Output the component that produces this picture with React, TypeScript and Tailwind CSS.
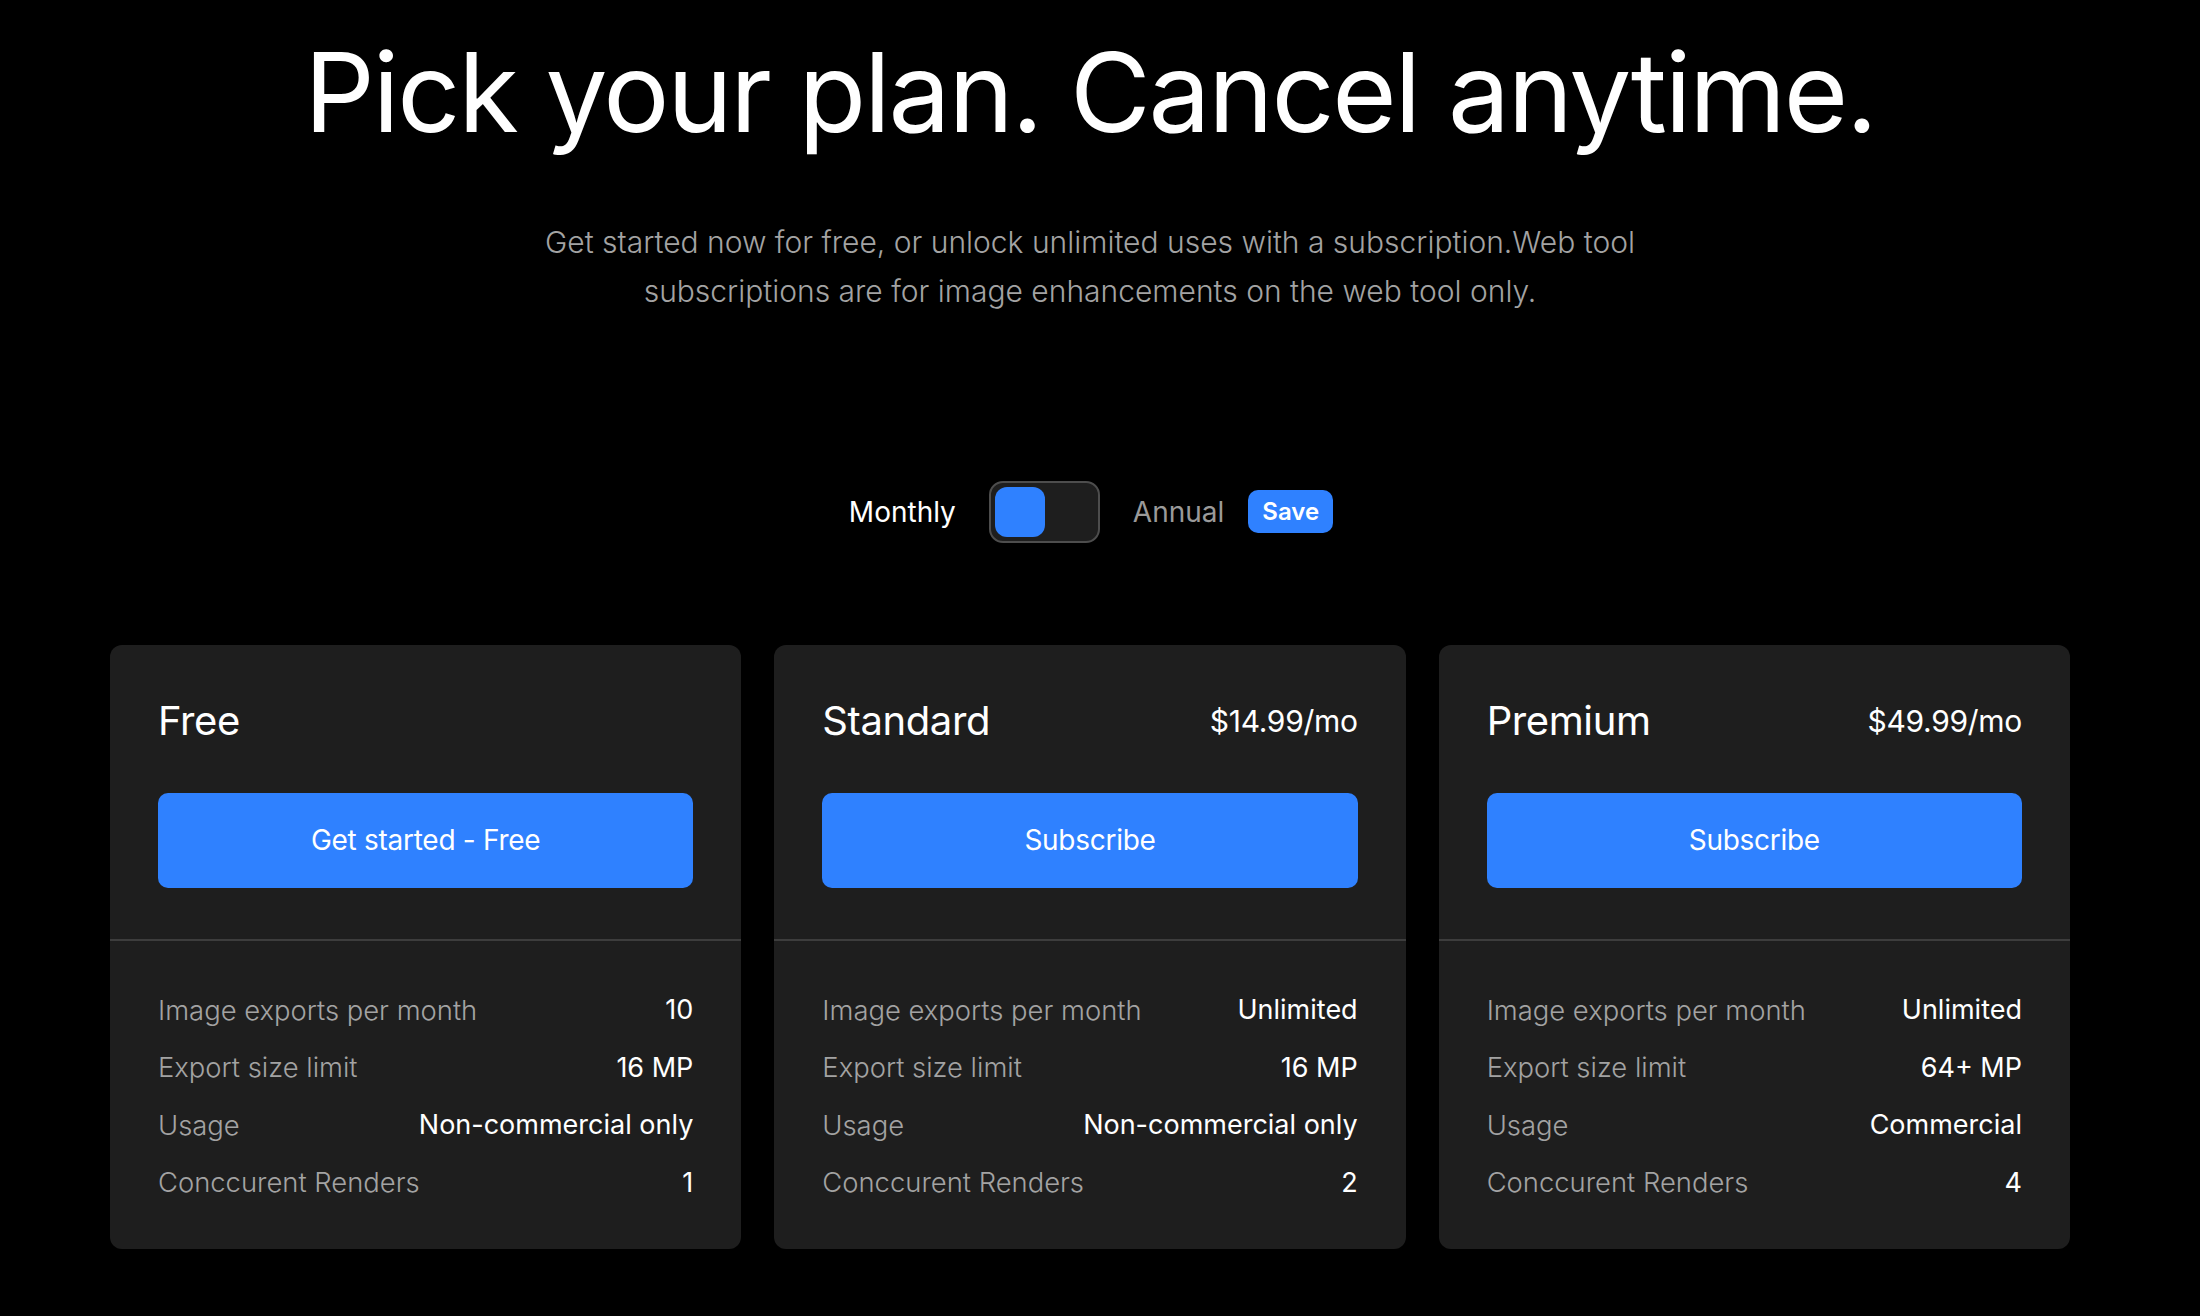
import React from "react";

type Plan = {
  name: string;
  price?: string;
  cta: string;
  rows: [string, string][];
};

const plans: Plan[] = [
  {
    name: "Free",
    cta: "Get started - Free",
    rows: [
      ["Image exports per month", "10"],
      ["Export size limit", "16 MP"],
      ["Usage", "Non-commercial only"],
      ["Conccurent Renders", "1"],
    ],
  },
  {
    name: "Standard",
    price: "$14.99/mo",
    cta: "Subscribe",
    rows: [
      ["Image exports per month", "Unlimited"],
      ["Export size limit", "16 MP"],
      ["Usage", "Non-commercial only"],
      ["Conccurent Renders", "2"],
    ],
  },
  {
    name: "Premium",
    price: "$49.99/mo",
    cta: "Subscribe",
    rows: [
      ["Image exports per month", "Unlimited"],
      ["Export size limit", "64+ MP"],
      ["Usage", "Commercial"],
      ["Conccurent Renders", "4"],
    ],
  },
];

function PlanCard({ plan }: { plan: Plan }) {
  return (
    <div className="bg-[#1e1e1e] rounded-[12px] overflow-hidden flex flex-col">
      <div className="px-[48px] pt-[52px] pb-[51px]">
        <div className="flex items-center justify-between h-[48px]">
          <span className="text-[40px] leading-none text-white tracking-[-0.01em]">{plan.name}</span>
          {plan.price && (
            <span className="text-[30px] leading-none text-white tracking-[-0.01em]">{plan.price}</span>
          )}
        </div>
        <button className="mt-[48px] w-full h-[95px] rounded-[10px] bg-[#2f81ff] text-white text-[28px] tracking-[-0.01em]">
          {plan.cta}
        </button>
      </div>
      <div className="h-[2px] bg-[#3d3d3d]" />
      <div className="px-[48px] pt-[41px] pb-[37px]">
        {plan.rows.map(([label, value]) => (
          <div key={label} className="flex items-center justify-between h-[57.5px]">
            <span className="text-[27.4px] font-light text-[#a3a3a3]">{label}</span>
            <span className="text-[27px] text-white">{value}</span>
          </div>
        ))}
      </div>
    </div>
  );
}

export default function App() {
  return (
    <div className="min-h-screen bg-black font-['Inter','Noto_Sans',sans-serif]">
      <div className="w-[2180px] flex flex-col items-center pb-[67px]">
        <h1 className="mt-[37px] text-[110.5px] leading-none text-white tracking-[-0.02em] font-normal">
          Pick your plan. Cancel anytime.
        </h1>
        <p className="mt-[70px] text-[30px] leading-[49px] font-light text-[#a3a3a3] text-center">
          Get started now for free, or unlock unlimited uses with a subscription.Web tool
          <br />
          subscriptions are for image enhancements on the web tool only.
        </p>
        <div className="mt-[165px] flex items-center h-[62px] ml-[2px]">
          <span className="text-[28px] text-white">Monthly</span>
          <div className="ml-[33px] w-[111px] h-[62px] rounded-[14px] border-2 border-[#4d4d4d] bg-[#1e1e1e] flex items-center pl-[4px]">
            <div className="w-[50px] h-[50px] rounded-[12px] bg-[#2f81ff]" />
          </div>
          <span className="ml-[33px] text-[28px] text-[#9a9a9a]">Annual</span>
          <span className="ml-[24px] h-[43px] px-[14px] rounded-[10px] bg-[#2f81ff] text-white text-[24px] font-semibold flex items-center">
            Save
          </span>
        </div>
        <div className="mt-[102px] grid grid-cols-3 gap-[33px] w-[1960px]">
          {plans.map((p) => (
            <PlanCard key={p.name} plan={p} />
          ))}
        </div>
      </div>
    </div>
  );
}
